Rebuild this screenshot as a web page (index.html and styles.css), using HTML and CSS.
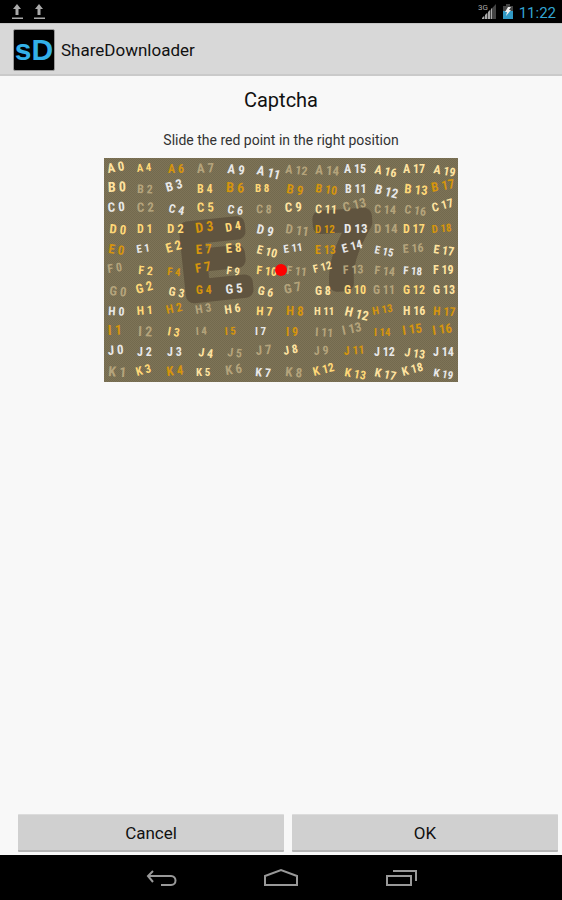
FILE: index.html
```html
<!DOCTYPE html>
<html lang="en">
<head>
<meta charset="utf-8">
<meta name="viewport" content="width=device-width, initial-scale=1">
<title>ShareDownloader</title>
<link rel="stylesheet" href="styles.css">
</head>
<body>
<div class="status">
  <svg class="notices" width="48" height="24" viewBox="0 0 48 24" fill="#aaa" aria-hidden="true">
    <path id="upload" d="M7 4 11 9H8.500V15H5.500V9H3ZM2 17.500H13V19H2Z"/>
    <use href="#upload" x="22"/>
  </svg>
  <div class="status-right">
    <svg width="20" height="24" viewBox="0 0 20 24" aria-hidden="true">
      <text class="net" x="0" y="10">3G</text>
      <path fill="#444" d="M4 19 18 4V19Z"/>
      <path fill="#aaa" d="M4 19V18L6 16V19ZM7 19V15L9 13V19ZM10 19V12L12 10V19ZM13 19V9L14 8V19Z"/>
    </svg>
    <svg width="10" height="24" viewBox="0 0 10 24" aria-hidden="true">
      <path fill="#444" d="M3 4H7V6H10V12H0V6H3Z"/>
      <path fill="#3199c4" d="M0 11H10V19H0Z"/>
      <path fill="#eee" d="M5 7H8L6 10H8L3 16 4 12H2Z"/>
    </svg>
    <time>11:22</time>
  </div>
</div>
<header class="bar">
  <span class="logo">sD</span>
  <span class="app">ShareDownloader</span>
</header>
<main>
  <h1>Captcha</h1>
  <p>Slide the red point in the right position</p>
  <svg class="captcha" viewBox="0 0 354 224" role="img" aria-label="Captcha">
    <defs>
      <pattern id="weave" width="2" height="2" patternUnits="userSpaceOnUse">
        <rect width="2" height="2" fill="#82775a"/>
        <rect width="1" height="1" fill="#6f664b"/>
        <rect x="1" y="1" width="1" height="1" fill="#6f664b"/>
      </pattern>
    </defs>
    <rect width="354" height="224" fill="url(#weave)"/>
    <g class="big">
      <text transform="translate(82 138) rotate(-6)">E</text>
      <text transform="translate(216 127) rotate(-4)">7</text>
    </g>
    <g class="grid">
      <text class="c l" transform="translate(4 15) rotate(-10)">A 0</text>
      <text class="y s" transform="translate(33 14) rotate(-5)">A 4</text>
      <text class="o" transform="translate(64 15)">A 6</text>
      <text class="t l" transform="translate(93 15) rotate(-3)">A 7</text>
      <text class="w l" transform="translate(123 15) rotate(6)">A 9</text>
      <text class="w l" transform="translate(152 16) rotate(14)">A 11</text>
      <text class="t" transform="translate(181 15) rotate(6)">A 12</text>
      <text class="t l" transform="translate(211 16) rotate(4)">A 14</text>
      <text class="w" transform="translate(240 15)">A 15</text>
      <text class="c" transform="translate(270 15) rotate(12)">A 16</text>
      <text class="c" transform="translate(299 15)">A 17</text>
      <text class="c" transform="translate(329 15) rotate(10)">A 19</text>

      <text class="c xl" transform="translate(4 34) rotate(-2)">B 0</text>
      <text class="t" transform="translate(33 35) rotate(2)">B 2</text>
      <text class="w l" transform="translate(63 34) rotate(-15)">B 3</text>
      <text class="y" transform="translate(93 35)">B 4</text>
      <text class="o xl" transform="translate(122 34) rotate(2)">B 6</text>
      <text class="y s" transform="translate(151 34)">B 8</text>
      <text class="o l" transform="translate(182 35) rotate(8)">B 9</text>
      <text class="o" transform="translate(211 34) rotate(8)">B 10</text>
      <text class="w" transform="translate(241 35)">B 11</text>
      <text class="w l" transform="translate(270 35) rotate(14)">B 12</text>
      <text class="y l" transform="translate(300 35) rotate(5)">B 13</text>
      <text class="o l" transform="translate(328 34) rotate(-10)">B 17</text>

      <text class="w l" transform="translate(4 54) rotate(-4)">C 0</text>
      <text class="t l" transform="translate(33 54) rotate(-2)">C 2</text>
      <text class="w" transform="translate(64 54) rotate(12)">C 4</text>
      <text class="y l" transform="translate(93 54) rotate(-2)">C 5</text>
      <text class="w" transform="translate(123 55) rotate(8)">C 6</text>
      <text class="t" transform="translate(152 55) rotate(2)">C 8</text>
      <text class="c l" transform="translate(181 54) rotate(-3)">C 9</text>
      <text class="c" transform="translate(211 55) rotate(2)">C 11</text>
      <text class="t l" transform="translate(240 54) rotate(-14)">C 13</text>
      <text class="t" transform="translate(270 55) rotate(3)">C 14</text>
      <text class="t" transform="translate(300 55) rotate(8)">C 16</text>
      <text class="c" transform="translate(329 54) rotate(-15)">C 17</text>

      <text class="y l" transform="translate(5 75) rotate(6)">D 0</text>
      <text class="y" transform="translate(33 75)">D 1</text>
      <text class="y l" transform="translate(63 75)">D 2</text>
      <text class="o xl" transform="translate(92 75) rotate(-8)">D 3</text>
      <text class="y" transform="translate(122 74) rotate(-10)">D 4</text>
      <text class="w l" transform="translate(152 75) rotate(12)">D 9</text>
      <text class="t l" transform="translate(181 75) rotate(8)">D 11</text>
      <text class="o s" transform="translate(211 75)">D 12</text>
      <text class="w l" transform="translate(240 75)">D 13</text>
      <text class="t l" transform="translate(270 75)">D 14</text>
      <text class="y" transform="translate(299 75)">D 17</text>
      <text class="o s" transform="translate(328 75) rotate(-5)">D 18</text>

      <text class="o l" transform="translate(4 95) rotate(8)">E 0</text>
      <text class="w s" transform="translate(33 95) rotate(-8)">E 1</text>
      <text class="y l" transform="translate(63 95) rotate(-15)">E 2</text>
      <text class="o l" transform="translate(92 96) rotate(-3)">E 7</text>
      <text class="y l" transform="translate(122 95) rotate(-5)">E 8</text>
      <text class="c" transform="translate(152 95) rotate(14)">E 10</text>
      <text class="w s" transform="translate(180 95) rotate(-8)">E 11</text>
      <text class="o" transform="translate(211 96)">E 13</text>
      <text class="w" transform="translate(239 95) rotate(-15)">E 14</text>
      <text class="w s" transform="translate(270 95) rotate(12)">E 15</text>
      <text class="t" transform="translate(299 95) rotate(-4)">E 16</text>
      <text class="c" transform="translate(329 95) rotate(8)">E 17</text>

      <text class="t" transform="translate(4 115) rotate(-8)">F 0</text>
      <text class="y" transform="translate(34 116) rotate(5)">F 2</text>
      <text class="o s" transform="translate(63 117) rotate(5)">F 4</text>
      <text class="o l" transform="translate(92 115) rotate(-10)">F 7</text>
      <text class="c s" transform="translate(122 116) rotate(8)">F 9</text>
      <text class="y" transform="translate(152 116) rotate(6)">F 10</text>
      <text class="t" transform="translate(182 116) rotate(6)">F 11</text>
      <text class="c s" transform="translate(210 115) rotate(-14)">F 12</text>
      <text class="t" transform="translate(239 116) rotate(-2)">F 13</text>
      <text class="t" transform="translate(270 116) rotate(6)">F 14</text>
      <text class="w s" transform="translate(299 116) rotate(4)">F 18</text>
      <text class="c" transform="translate(329 116)">F 19</text>

      <text class="t l" transform="translate(5 137) rotate(6)">G 0</text>
      <text class="y l" transform="translate(33 136) rotate(-15)">G 2</text>
      <text class="c" transform="translate(64 137) rotate(10)">G 3</text>
      <text class="o" transform="translate(92 136) rotate(-2)">G 4</text>
      <text class="w l" transform="translate(122 136) rotate(-6)">G 5</text>
      <text class="c" transform="translate(153 136) rotate(12)">G 6</text>
      <text class="t l" transform="translate(181 136) rotate(-12)">G 7</text>
      <text class="c" transform="translate(211 137)">G 8</text>
      <text class="y" transform="translate(240 136)">G 10</text>
      <text class="t" transform="translate(269 136)">G 11</text>
      <text class="y" transform="translate(299 136)">G 12</text>
      <text class="c" transform="translate(329 136)">G 13</text>

      <text class="w" transform="translate(4 157) rotate(3)">H 0</text>
      <text class="y" transform="translate(33 157) rotate(-4)">H 1</text>
      <text class="o" transform="translate(63 156) rotate(-12)">H 2</text>
      <text class="t" transform="translate(92 156) rotate(-10)">H 3</text>
      <text class="c" transform="translate(121 156) rotate(-8)">H 6</text>
      <text class="y" transform="translate(152 157) rotate(3)">H 7</text>
      <text class="o l" transform="translate(182 157) rotate(2)">H 8</text>
      <text class="c s" transform="translate(210 157)">H 11</text>
      <text class="c l" transform="translate(240 157) rotate(14)">H 12</text>
      <text class="o s" transform="translate(269 157) rotate(-10)">H 13</text>
      <text class="c" transform="translate(299 157)">H 16</text>
      <text class="o" transform="translate(329 157) rotate(3)">H 17</text>

      <text class="o xl" transform="translate(4 177) rotate(-2)">I 1</text>
      <text class="t xl" transform="translate(34 178) rotate(2)">I 2</text>
      <text class="y" transform="translate(63 177) rotate(10)">I 3</text>
      <text class="t s" transform="translate(92 177) rotate(-3)">I 4</text>
      <text class="o s" transform="translate(121 177) rotate(-3)">I 5</text>
      <text class="w s" transform="translate(151 177)">I 7</text>
      <text class="o" transform="translate(182 178)">I 9</text>
      <text class="t" transform="translate(211 178) rotate(3)">I 11</text>
      <text class="t l" transform="translate(239 177) rotate(-12)">I 13</text>
      <text class="o s" transform="translate(270 178)">I 14</text>
      <text class="o l" transform="translate(299 177) rotate(-8)">I 15</text>
      <text class="o l" transform="translate(329 177) rotate(-8)">I 16</text>

      <text class="w l" transform="translate(4 197) rotate(-4)">J 0</text>
      <text class="w" transform="translate(33 198)">J 2</text>
      <text class="w" transform="translate(63 198)">J 3</text>
      <text class="c" transform="translate(94 198) rotate(8)">J 4</text>
      <text class="t" transform="translate(123 198) rotate(6)">J 5</text>
      <text class="t l" transform="translate(152 197) rotate(-4)">J 7</text>
      <text class="c" transform="translate(180 197) rotate(-10)">J 8</text>
      <text class="t" transform="translate(210 197) rotate(-3)">J 9</text>
      <text class="o" transform="translate(240 197) rotate(-4)">J 11</text>
      <text class="w" transform="translate(270 198)">J 12</text>
      <text class="c" transform="translate(300 198) rotate(8)">J 13</text>
      <text class="w" transform="translate(329 198)">J 14</text>

      <text class="t xl" transform="translate(4 218) rotate(4)">K 1</text>
      <text class="y" transform="translate(33 218) rotate(-15)">K 3</text>
      <text class="o l" transform="translate(63 218) rotate(-6)">K 4</text>
      <text class="c s" transform="translate(92 218)">K 5</text>
      <text class="t l" transform="translate(122 217) rotate(-8)">K 6</text>
      <text class="w" transform="translate(151 218) rotate(5)">K 7</text>
      <text class="t l" transform="translate(181 218) rotate(5)">K 8</text>
      <text class="y" transform="translate(210 218) rotate(-14)">K 12</text>
      <text class="y" transform="translate(240 218) rotate(10)">K 13</text>
      <text class="c" transform="translate(270 218) rotate(12)">K 17</text>
      <text class="c" transform="translate(299 218) rotate(-15)">K 18</text>
      <text class="w s" transform="translate(329 218) rotate(10)">K 19</text>
    </g>
    <circle cx="177" cy="112" r="6" fill="#f00"/>
  </svg>
</main>
<div class="actions">
  <button type="button">Cancel</button>
  <button type="button">OK</button>
</div>
<nav class="nav">
  <button type="button" aria-label="Back"><svg width="48" height="32" viewBox="0 0 48 32"><path d="M16 9 11 14 16 20M11 14H34C40 14 40 23 34 23H24"/></svg></button>
  <button type="button" aria-label="Home"><svg width="48" height="32" viewBox="0 0 48 32"><path d="M8 23V14L24 8 40 14V23Z"/></svg></button>
  <button type="button" aria-label="Recent apps"><svg width="48" height="32" viewBox="0 0 48 32"><path d="M10 14H34V23H10ZM16 9H39V19"/></svg></button>
</nav>
</body>
</html>
```
FILE: styles.css
```css
* {
  box-sizing: border-box;
}

body {
  margin: 0;
  min-height: 100vh;
  display: flex;
  flex-direction: column;
  background: #f8f8f8;
  color: #111;
  font-family: Roboto, "Liberation Sans", sans-serif;
}

svg {
  display: block;
}

.status {
  height: 23px;
  padding: 0 6px 0 10px;
  display: flex;
  justify-content: space-between;
  background: #000;
}

.status-right {
  display: flex;
  gap: 5px;
}

.status time {
  margin-left: 1px;
  color: #33a5d2;
  font-size: 15px;
  line-height: 26px;
}

.net {
  fill: #aaa;
  font-size: 8px;
}

.bar {
  height: 53px;
  padding: 1px 13px 0;
  display: flex;
  align-items: center;
  gap: 6px;
  background: #d8d8d8;
  border-top: 1px solid #c4c4c4;
  border-bottom: 2px solid #cacaca;
}

.logo {
  width: 42px;
  height: 42px;
  border: 1px solid #999;
  border-radius: 2px;
  background: #000;
  color: #33b0e8;
  font: bold 30px/40px "Liberation Sans", sans-serif;
  text-align: center;
}

.app {
  font-size: 17px;
  line-height: 22px;
}

main {
  flex: 1;
  text-align: center;
}

h1 {
  margin: 12px 0 18px;
  font-size: 20px;
  font-weight: 400;
  line-height: 24px;
}

p {
  margin: 0 0 8px;
  color: #333;
  font-size: 14px;
  line-height: 20px;
}

.captcha {
  width: 63%;
  margin: 0 auto;
}

.grid {
  font: bold 12px "Liberation Sans Narrow", "Roboto Condensed", Lato, sans-serif;
}

.s {
  font-size: 11px;
}

.l {
  font-size: 13px;
}

.xl {
  font-size: 14px;
}

.c {
  fill: #ffe3a0;
}

.y {
  fill: #ffd878;
}

.o {
  fill: #d6950c;
}

.t {
  fill: #b5a47c;
}

.w {
  fill: #e8e8e8;
}

.big {
  font: 96px "Liberation Sans", sans-serif;
  fill: #60543f;
  stroke: #60543f;
  stroke-width: 16px;
  stroke-linejoin: round;
}

.actions {
  padding: 0 4px 3px 18px;
  display: flex;
  gap: 8px;
}

.actions button {
  flex: 1;
  height: 38px;
  padding: 0;
  border: 0;
  border-top: 1px solid #dcdcdc;
  border-bottom: 2px solid #b4b4b4;
  border-radius: 1px;
  background: #d0d0d0;
  color: #111;
  font: 17px/36px Roboto, sans-serif;
}

.nav {
  height: 45px;
  display: flex;
  justify-content: center;
  align-items: center;
  gap: 72px;
  background: #000;
}

.nav button {
  padding: 0;
  border: 0;
  background: none;
}

.nav path {
  fill: none;
  stroke: #999;
  stroke-width: 2px;
}
```
